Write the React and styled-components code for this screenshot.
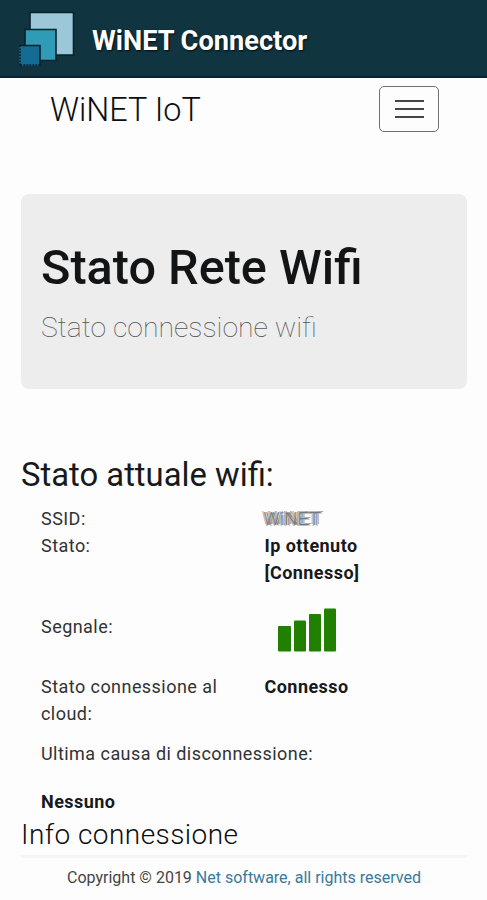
import React from 'react';
import styled, { createGlobalStyle } from 'styled-components';

const GlobalStyle = createGlobalStyle`
  * { box-sizing: border-box; }
  body {
    margin: 0;
    background: #fdfdfd;
    color: #17191b;
    font-family: Roboto, "Liberation Sans", sans-serif;
  }
  h1, h2, h3, p, dl, dt, dd { margin: 0; }
`;

const Page = styled.div`
  display: flex;
  flex-direction: column;
  height: 900px;
  overflow: hidden;
`;

const AppBar = styled.header`
  display: flex;
  align-items: center;
  height: 78px;
  padding: 0 0 0 19px;
  background: #103440;
  border-bottom: 2px solid #0b1f36;
`;

const Logo = styled.svg`
  width: 58px;
  height: 58px;
  margin-right: 15px;
`;

const AppTitle = styled.div`
  margin-top: 6px;
  font-size: 27.2px;
  line-height: 32px;
  font-weight: 700;
  color: #fff;
  text-shadow: 1px 1px 2px rgba(0, 0, 0, 0.75);
`;

const NavBar = styled.nav`
  display: flex;
  align-items: center;
  justify-content: space-between;
  height: 62px;
  padding: 0 48px 0 50px;
`;

const Brand = styled.div`
  margin-top: 1px;
  font-size: 32.4px;
  line-height: 40px;
  font-weight: 300;
  color: #0c0d0e;
`;

const MenuButton = styled.button`
  display: flex;
  flex-direction: column;
  align-items: center;
  justify-content: center;
  gap: 6px;
  width: 60px;
  height: 46px;
  padding: 0;
  background: transparent;
  border: 1px solid #707070;
  border-radius: 5px;
`;

const MenuLine = styled.span`
  width: 29px;
  height: 2px;
  background: #454545;
`;

const Hero = styled.section`
  height: 195px;
  margin: 54px 20px 0 21px;
  padding: 45px 20px 0;
  background: #ededed;
  border-radius: 8px;
`;

const HeroTitle = styled.h1`
  font-size: 48.6px;
  line-height: 58px;
  font-weight: 500;
  color: #131415;
`;

const HeroSubtitle = styled.p`
  margin-top: 10px;
  font-size: 28.4px;
  line-height: 42px;
  font-weight: 100;
  color: #555;
`;

const SectionTitle = styled.h2`
  margin: 66px 20px 0 21px;
  font-size: 32.8px;
  line-height: 40px;
  font-weight: 400;
`;

const Details = styled.dl`
  display: flex;
  flex-direction: column;
  margin: 10px 20px 0 41px;
  font-size: 18px;
  line-height: 27px;
  letter-spacing: 0.45px;
`;

const Row = styled.div`
  display: grid;
  grid-template-columns: 200px 1fr;
  column-gap: 23.5px;
  height: ${({ $height }) => $height}px;
  padding-top: ${({ $top }) => $top || 0}px;
`;

const Label = styled.dt`
  color: #303234;
`;

const Value = styled.dd`
  font-weight: 700;
  width: 120px;
`;

const MaskedValue = styled.dd`
  font-weight: 300;
  color: #777;
  margin-left: -1px;
  text-shadow: -2px -1px 0 #bbb, 2px 0 0 #888, 4px -1px 0 #aaa, -1px 1px 0 #bbb, 3px 1px 0 #ccc;
`;

const Signal = styled.svg`
  width: 62px;
  height: 46px;
  margin: -6px 0 0 12.5px;
`;

const Cause = styled.div`
  margin-top: 13px;
`;

const CauseValue = styled(Value)`
  margin-top: 21px;
`;

const InfoTitle = styled.h3`
  margin: 3px 20px 0 21px;
  font-size: 28px;
  line-height: 34px;
  font-weight: 300;
  letter-spacing: 0.45px;
  color: #0c0d0e;
`;

const Footer = styled.footer`
  margin: 3px 20px 0 21px;
  padding-top: 8px;
  border-top: 3px solid #f4f5f5;
  font-size: 16px;
  line-height: 24px;
  text-align: center;
  white-space: nowrap;
  color: #444;
`;

const FooterLink = styled.a`
  color: #38799c;
`;

function BrandLogo() {
  return (
    <Logo viewBox="0 0 58 58">
      <g stroke="#09212e" strokeWidth="1.6">
        <path d="M11 3.5H54.5V46H11Z" fill="#9bc7d8" />
        <path d="M6 20.5H37V51.5H6Z" fill="#309bb6" />
        <path d="M1 36.5H21V56H1Z" fill="#146c94" />
      </g>
      <path d="M1 38V56M3 56H20" fill="none" stroke="#146c94" strokeWidth="1.6" strokeDasharray="1.5 1.5" />
    </Logo>
  );
}

export default function App() {
  return (
    <>
      <GlobalStyle />
      <Page>
        <AppBar>
          <BrandLogo />
          <AppTitle>WiNET Connector</AppTitle>
        </AppBar>
        <NavBar>
          <Brand>WiNET IoT</Brand>
          <MenuButton aria-label="Menu">
            <MenuLine />
            <MenuLine />
            <MenuLine />
          </MenuButton>
        </NavBar>
        <Hero>
          <HeroTitle>Stato Rete Wifi</HeroTitle>
          <HeroSubtitle>Stato connessione wifi</HeroSubtitle>
        </Hero>
        <SectionTitle>Stato attuale wifi:</SectionTitle>
        <Details>
          <Row $height={27}>
            <Label>SSID:</Label>
            <MaskedValue>WiNET</MaskedValue>
          </Row>
          <Row $height={54}>
            <Label>Stato:</Label>
            <Value>Ip ottenuto [Connesso]</Value>
          </Row>
          <Row $height={87} $top={27}>
            <Label>Segnale:</Label>
            <Signal viewBox="0 0 62 46">
              <g fill="#218000">
                <rect x="1" y="19" width="13" height="25.5" rx="1" />
                <rect x="17" y="13.5" width="12" height="31" rx="1" />
                <rect x="32" y="7" width="12" height="37.5" rx="1" />
                <rect x="47" y="1.5" width="12" height="43" rx="1" />
              </g>
            </Signal>
          </Row>
          <Row $height={54}>
            <Label>Stato connessione al cloud:</Label>
            <Value>Connesso</Value>
          </Row>
          <Cause>
            <Label>Ultima causa di disconnessione:</Label>
            <CauseValue>Nessuno</CauseValue>
          </Cause>
        </Details>
        <InfoTitle>Info connessione</InfoTitle>
        <Footer>
          Copyright © 2019 <FooterLink>Net software, all rights reserved</FooterLink>
        </Footer>
      </Page>
    </>
  );
}
